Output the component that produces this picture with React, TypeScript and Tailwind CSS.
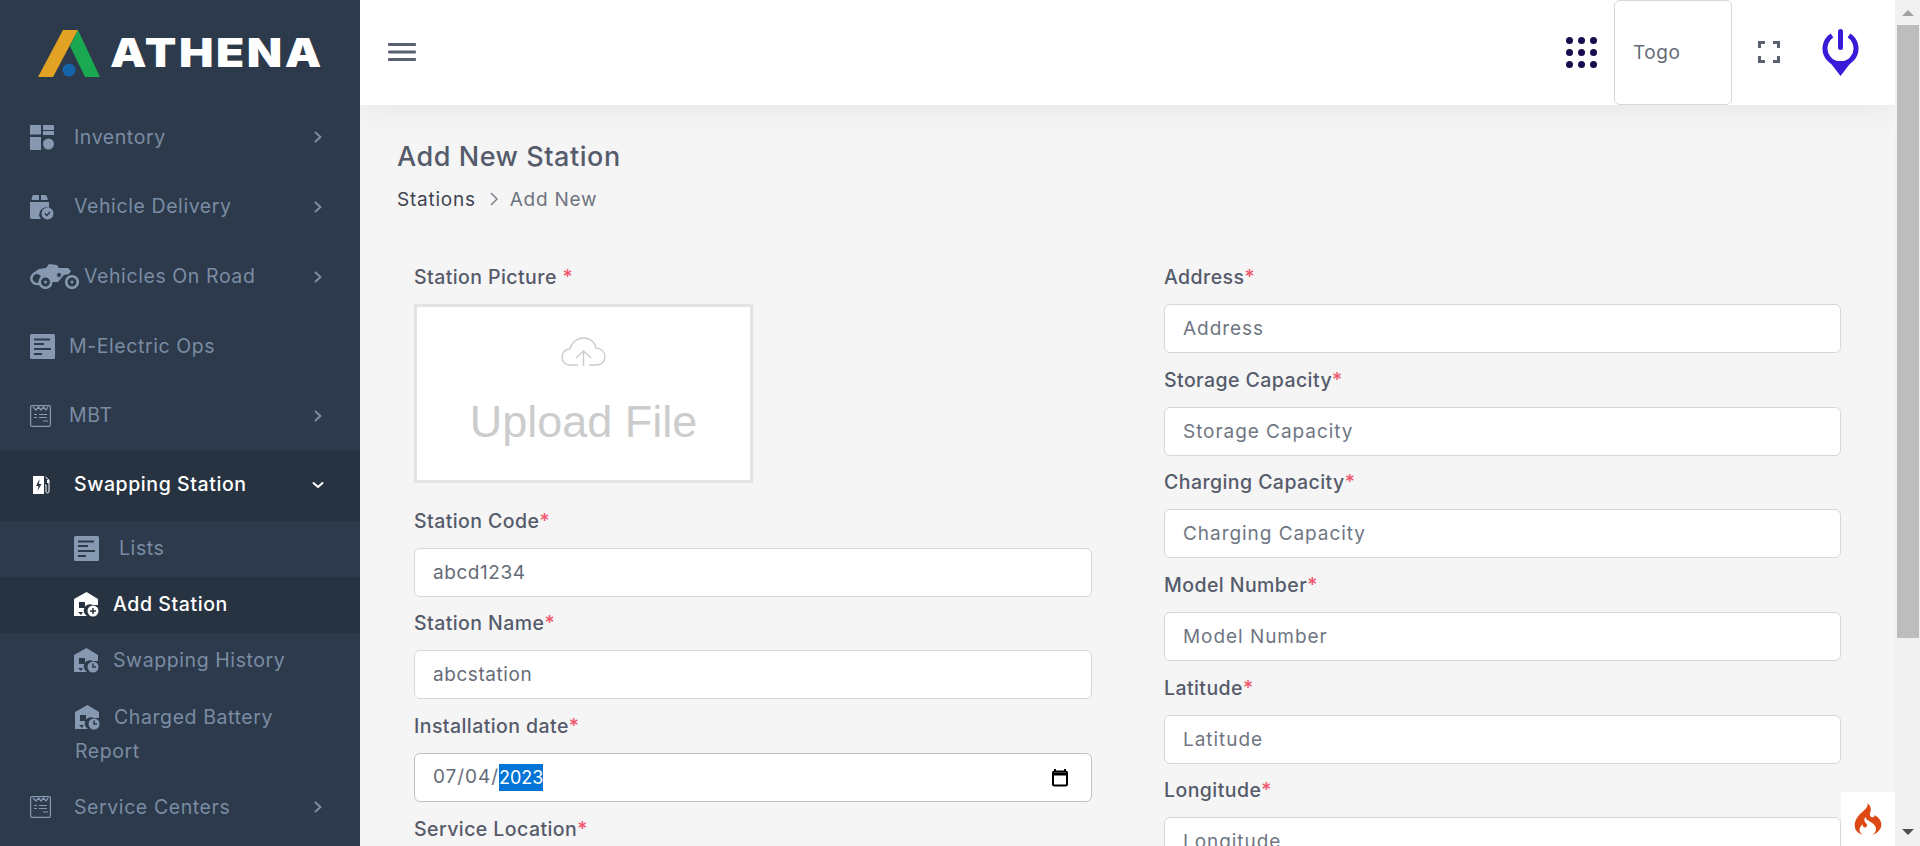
import { SiCodeigniter } from "react-icons/si";

const ink = "#8799b0";

function Chevron({ open }: { open?: boolean }) {
  return (
    <svg width="14" height="14" viewBox="0 0 14 14" fill="none" stroke={open ? "#fff" : "#7b8ca3"} strokeWidth="2" strokeLinecap="round" strokeLinejoin="round">
      {open ? <path d="M2.500 5l4.500 4 4.500-4" /> : <path d="M4.500 2.500l5 4.500-5 4.500" />}
    </svg>
  );
}

function InventoryIcon() {
  return (
    <svg width="24" height="25" viewBox="0 0 24 25" fill={ink}>
      <path d="M1 0h10v9.500H0V1a1 1 0 0 1 1-1z" />
      <path d="M13 0h10a1 1 0 0 1 1 1v4H13z" />
      <rect x="13" y="6" width="11" height="4" />
      <path d="M0 12h11v13H1a1 1 0 0 1-1-1z" />
      <circle cx="18.500" cy="19" r="5.500" />
    </svg>
  );
}

function DeliveryIcon() {
  return (
    <svg width="24" height="25" viewBox="0 0 24 25" fill={ink}>
      <path d="M4 0h5v5H1.500L2 2a2 2 0 0 1 2-2zM11 0h4a2 2 0 0 1 2 2l1 3h-7z" />
      <path d="M0 7h19v6a7 7 0 0 0-8 11H2a2 2 0 0 1-2-2z" />
      <circle cx="17.500" cy="18.500" r="6" />
      <path d="M14.800 18.500l2 2 3.200-3.600" fill="none" stroke="#2c3a4c" strokeWidth="1.500" />
    </svg>
  );
}

function QuadIcon() {
  return (
    <svg width="49" height="25" viewBox="0 0 49 25" fill="none" stroke={ink}>
      <path d="M3 9l6-4 7-1 3-4 8 1 2 3 9 0 3 3-2 3-5 1-6 7H20l-2-6-8-1-5 1z" fill={ink} stroke="none" />
      <circle cx="7" cy="14.500" r="5.600" fill="#2c3a4c" strokeWidth="2.400" />
      <circle cx="15.500" cy="18" r="5.800" fill="#2c3a4c" strokeWidth="2.600" />
      <circle cx="42" cy="18" r="5.800" fill="#2c3a4c" strokeWidth="2.600" />
      <circle cx="15.500" cy="18" r="1.500" fill={ink} stroke="none" />
      <circle cx="42" cy="18" r="1.500" fill={ink} stroke="none" />
      <circle cx="29" cy="11" r="2.500" fill="#2c3a4c" strokeWidth="1" />
    </svg>
  );
}

function ListIcon() {
  return (
    <svg width="25" height="25" viewBox="0 0 25 25">
      <rect width="25" height="25" rx="1.500" fill={ink} />
      <path d="M4 5.500h16M4 10h10M4 15h17M4 20h8" stroke="#2c3a4c" strokeWidth="2" />
    </svg>
  );
}

function ReceiptIcon() {
  return (
    <svg width="21" height="22" viewBox="0 0 21 22" fill="none" stroke={ink} strokeWidth="1.200">
      <rect x=".6" y=".6" width="19.800" height="20.800" rx="1.500" />
      <path d="M3 2l3 3 2.500-3 2.500 3 2.500-3 2.500 3 2-3" />
      <path d="M4 9.500h3M9 9.500h8M4 12.500h3M9 12.500h8M13 16h5" />
    </svg>
  );
}

function ChargerIcon() {
  return (
    <svg width="18" height="18" viewBox="0 0 18 18" fill="#fff">
      <path d="M0 0h11v18H0z" />
      <path d="M6.500 3L3 10h2.500L4.500 15 8.500 8H6z" fill="#273340" />
      <path d="M12.500 1l3.500 3v11.500a1.500 1.500 0 0 1-3 0V9h-1" fill="none" stroke="#fff" strokeWidth="1" />
      <rect x="14" y="4" width="2" height="3" />
    </svg>
  );
}

function StationIcon({ color, plus, cut }: { color: string; plus?: boolean; cut: string }) {
  return (
    <svg width="25" height="25" viewBox="0 0 25 25" fill={color}>
      <path d="M12.500 0L24 7v6h-5a6 6 0 0 0-6 11H0V7z" />
      <rect x="5" y="10" width="6" height="6" fill={cut} />
      <path d="M4 20h5l-2 3z" fill={cut} />
      <circle cx="19" cy="19" r="5.500" />
      {plus ? (
        <path d="M16 19h6M19 16v6" stroke={cut} strokeWidth="1.500" />
      ) : (
        <path d="M19 15.500V19h3" fill="none" stroke={cut} strokeWidth="1.500" />
      )}
    </svg>
  );
}

function NavItem({
  icon,
  label,
  gap,
  more,
  active,
}: {
  icon: React.ReactNode;
  label: string;
  gap: string;
  more?: boolean;
  active?: boolean;
}) {
  return (
    <div className={`flex h-[69.7px] items-center pl-[30px] pr-[35px] ${active ? "bg-[#273340] pb-[2px] text-white font-medium" : "text-[#7b8ca3]"}`}>
      <span className={`flex shrink-0 items-center ${gap}`}>{icon}</span>
      <span className="flex-1">{label}</span>
      {more && <Chevron open={active} />}
    </div>
  );
}

function SubItem({ icon, label, gap, active }: { icon: React.ReactNode; label: string; gap: string; active?: boolean }) {
  return (
    <div className={`flex h-[56px] items-center pl-[74px] ${active ? "bg-[#273340] text-white font-medium" : "text-[#7b8ca3]"}`}>
      <span className={`flex shrink-0 ${gap}`}>{icon}</span>
      {label}
    </div>
  );
}

function Sidebar() {
  return (
    <aside className="w-[360px] shrink-0 overflow-hidden bg-[#2c3a4c] text-[19.500px] tracking-[0.03em] font-['Inter',sans-serif]">
      <div className="flex h-[102.500px] items-start pl-[38px] pt-[30px]">
        <svg width="62" height="47" viewBox="0 0 62 47" className="shrink-0">
          <path d="M0 47L25 0h15L15 47z" fill="#e2a324" />
          <path d="M40 0l22 47H47L32 16z" fill="#1aa950" />
          <circle cx="31" cy="40" r="6.500" fill="#1665ab" />
        </svg>
        <span className="ml-[10px] mt-[6px] inline-block origin-left scale-x-[1.15] text-[40px] leading-[34px] font-black tracking-[0.055em] text-white font-['Inter',sans-serif]">ATHENA</span>
      </div>
      <NavItem icon={<InventoryIcon />} label="Inventory" gap="w-[44px]" more />
      <NavItem icon={<DeliveryIcon />} label="Vehicle Delivery" gap="w-[44px]" more />
      <NavItem icon={<QuadIcon />} label="Vehicles On Road" gap="w-[54px]" more />
      <NavItem icon={<ListIcon />} label="M-Electric Ops" gap="w-[39px]" />
      <NavItem icon={<ReceiptIcon />} label="MBT" gap="w-[39px]" more />
      <NavItem icon={<span className="pl-[3px]"><ChargerIcon /></span>} label="Swapping Station" gap="w-[44px]" more active />
      <SubItem icon={<ListIcon />} label="Lists" gap="w-[45px]" />
      <SubItem icon={<StationIcon color="#fff" cut="#273340" plus />} label="Add Station" gap="w-[39px]" active />
      <SubItem icon={<StationIcon color={ink} cut="#2c3a4c" />} label="Swapping History" gap="w-[39px]" />
      <div className="h-[84px] pl-[75px] pr-[50px] pt-[11px] leading-[34px] text-[#7b8ca3]">
        <span className="mr-[14px] inline-block align-[-6px]"><StationIcon color={ink} cut="#2c3a4c" /></span>
        Charged Battery Report
      </div>
      <NavItem icon={<ReceiptIcon />} label="Service Centers" gap="w-[44px]" more />
    </aside>
  );
}

function Header() {
  return (
    <header className="relative z-10 flex h-[105px] shrink-0 items-center bg-white pl-[28px] shadow-[0_8px_28px_rgba(0,0,0,0.05)]">
      <svg width="28" height="18" viewBox="0 0 28 18" fill="#5a6072" className="mb-[2px]">
        <rect width="28" height="3" rx="1" />
        <rect y="7.500" width="28" height="3" rx="1" />
        <rect y="15" width="28" height="3" rx="1" />
      </svg>
      <div className="ml-auto flex h-full items-center">
        <svg width="31" height="31" viewBox="0 0 31 31" fill="#1a0b4f">
          {[3.500, 15.500, 27.500].map((y) =>
            [3.500, 15.500, 27.500].map((x) => <circle key={`${x}-${y}`} cx={x} cy={y} r="3.500" />),
          )}
        </svg>
        <div className="ml-[17px] flex h-full w-[118px] items-center rounded-[6px] border border-[#d3d8e0] pl-[18px] pt-[2px] text-[19px] tracking-[0.03em] text-[#666b78]">
          Togo
        </div>
        <svg width="22" height="22" viewBox="0 0 22 22" fill="none" stroke="#5a6072" strokeWidth="3" className="mb-[2px] ml-[26px]">
          <path d="M1.500 7V1.500H7M15 1.500h5.500V7M20.500 15v5.500H15M7 20.500H1.500V15" />
        </svg>
        <svg width="37" height="47" viewBox="0 0 37 47" className="ml-[42px] mr-[36px]" fill="#3a1ad6">
          <path d="M10 6.500A15.500 15.500 0 1 0 27 6.500" fill="none" stroke="#3a1ad6" strokeWidth="5" />
          <rect x="16" y="0" width="5" height="21" rx="2.500" />
          <path d="M7 32l11.500 15L30 32z" />
        </svg>
      </div>
    </header>
  );
}

function Field({ label, value, placeholder }: { label: string; value?: string; placeholder?: string }) {
  return (
    <div className="mb-[12.67px]">
      <label className="mb-[13px] block pt-[1px] text-[19.500px] leading-[27px] font-medium tracking-[0.022em] text-[#555b6b]">
        {label}
        <span className="text-[#f1556c]">*</span>
      </label>
      <input
        readOnly
        value={value}
        placeholder={placeholder}
        className="block h-[49px] w-full rounded-[6px] border border-[#d3d8e0] bg-white px-[18px] text-[19px] tracking-[0.03em] text-[#666b78] outline-none placeholder:tracking-[0.05em] placeholder:text-[#6f7683]"
      />
    </div>
  );
}

function DateField() {
  return (
    <div className="mb-[12.67px]">
      <label className="mb-[13px] block pt-[1px] text-[19.500px] leading-[27px] font-medium tracking-[0.022em] text-[#555b6b]">
        Installation date<span className="text-[#f1556c]">*</span>
      </label>
      <div className="flex h-[49px] items-center rounded-[6px] border border-[#bdc0c7] bg-white pl-[18px] pr-[22px] text-[18px] text-[#666b78]">
        <span className="text-[19px] tracking-[0.05em]">07/04/</span>
        <span className="bg-[#0075d6] leading-[27px] text-white">2023</span>
        <svg width="18" height="18" viewBox="0 0 18 18" className="ml-auto" fill="none" stroke="#000" strokeWidth="2">
          <path d="M4 0v3M14 0v3" />
          <rect x="2" y="2.500" width="14" height="14" rx="1.500" />
          <path d="M2 5h14" strokeWidth="3" />
        </svg>
      </div>
    </div>
  );
}

function UploadBox() {
  return (
    <div className="mb-[24.200px]">
      <label className="mb-[12.500px] block pt-[1px] text-[19.500px] leading-[27px] font-medium tracking-[0.022em] text-[#555b6b]">
        Station Picture <span className="text-[#f1556c]">*</span>
      </label>
      <div className="flex h-[179px] w-[339px] flex-col items-center border-[3px] border-[#e3e3e3] bg-white pt-[30px]">
        <svg width="45" height="29" viewBox="0 0 45 29" fill="none" stroke="#cccccc" strokeWidth="1.400">
          <path d="M17 28H9C3 28 1 23 1 20c0-5 4-8 8-8C10 6 16 1 23 1c6 0 11 4 12 10 5 0 9 4 9 9s-4 8-9 8h-7" />
          <path d="M22.500 29V15M15 21l7.500-7 7.500 7" />
        </svg>
        <span className="mt-[30px] text-[45px] leading-[52px] text-[#cccccc] font-['Liberation_Sans',sans-serif]">Upload File</span>
      </div>
    </div>
  );
}

export default function App() {
  return (
    <div className="flex h-screen overflow-hidden bg-[#f5f5f5]">
      <Sidebar />
      <main className="relative flex min-w-0 flex-1 flex-col overflow-hidden font-['Inter',sans-serif]">
        <Header />
        <div className="pl-[37px] pt-[36px]">
          <h1 className="text-[27px] leading-[32px] font-medium tracking-[0.02em] text-[#555b6b]">Add New Station</h1>
          <div className="mt-[12.500px] flex items-center text-[19px] leading-[27px] tracking-[0.04em]">
            <span className="text-[#3f4350]">Stations</span>
            <svg width="12" height="16" viewBox="0 0 12 16" fill="none" stroke="#80858f" strokeWidth="1.500" className="ml-[12px] mr-[10px]">
              <path d="M3 2l6 6-6 6" />
            </svg>
            <span className="text-[#6f7480]">Add New</span>
          </div>
          <div className="ml-[17px] mt-[50.500px] grid grid-cols-[678px_677px] gap-x-[72px]">
            <div>
              <UploadBox />
              <Field label="Station Code" value="abcd1234" />
              <Field label="Station Name" value="abcstation" />
              <DateField />
              <Field label="Service Location" />
            </div>
            <div>
              <Field label="Address" placeholder="Address" />
              <Field label="Storage Capacity" placeholder="Storage Capacity" />
              <Field label="Charging Capacity" placeholder="Charging Capacity" />
              <Field label="Model Number" placeholder="Model Number" />
              <Field label="Latitude" placeholder="Latitude" />
              <Field label="Longitude" placeholder="Longitude" />
            </div>
          </div>
        </div>
        <div className="absolute bottom-0 right-0 flex h-[54px] w-[54px] items-center justify-center bg-white">
          <SiCodeigniter className="h-[32px] w-[32px] text-[#dd4814]" />
        </div>
      </main>
      <div className="flex w-[25px] shrink-0 flex-col items-center bg-[#f1f1f1] pl-[2px] pr-[1px]">
        <div className="flex h-[25px] items-center">
          <div className="h-0 w-0 border-x-[6px] border-b-[6px] border-x-transparent border-b-[#a3a3a3]" />
        </div>
        <div className="h-[613px] w-full bg-[#bdbdbd]" />
        <div className="mt-auto flex h-[28px] items-center">
          <div className="h-0 w-0 border-x-[6px] border-t-[6px] border-x-transparent border-t-[#505050]" />
        </div>
      </div>
    </div>
  );
}
